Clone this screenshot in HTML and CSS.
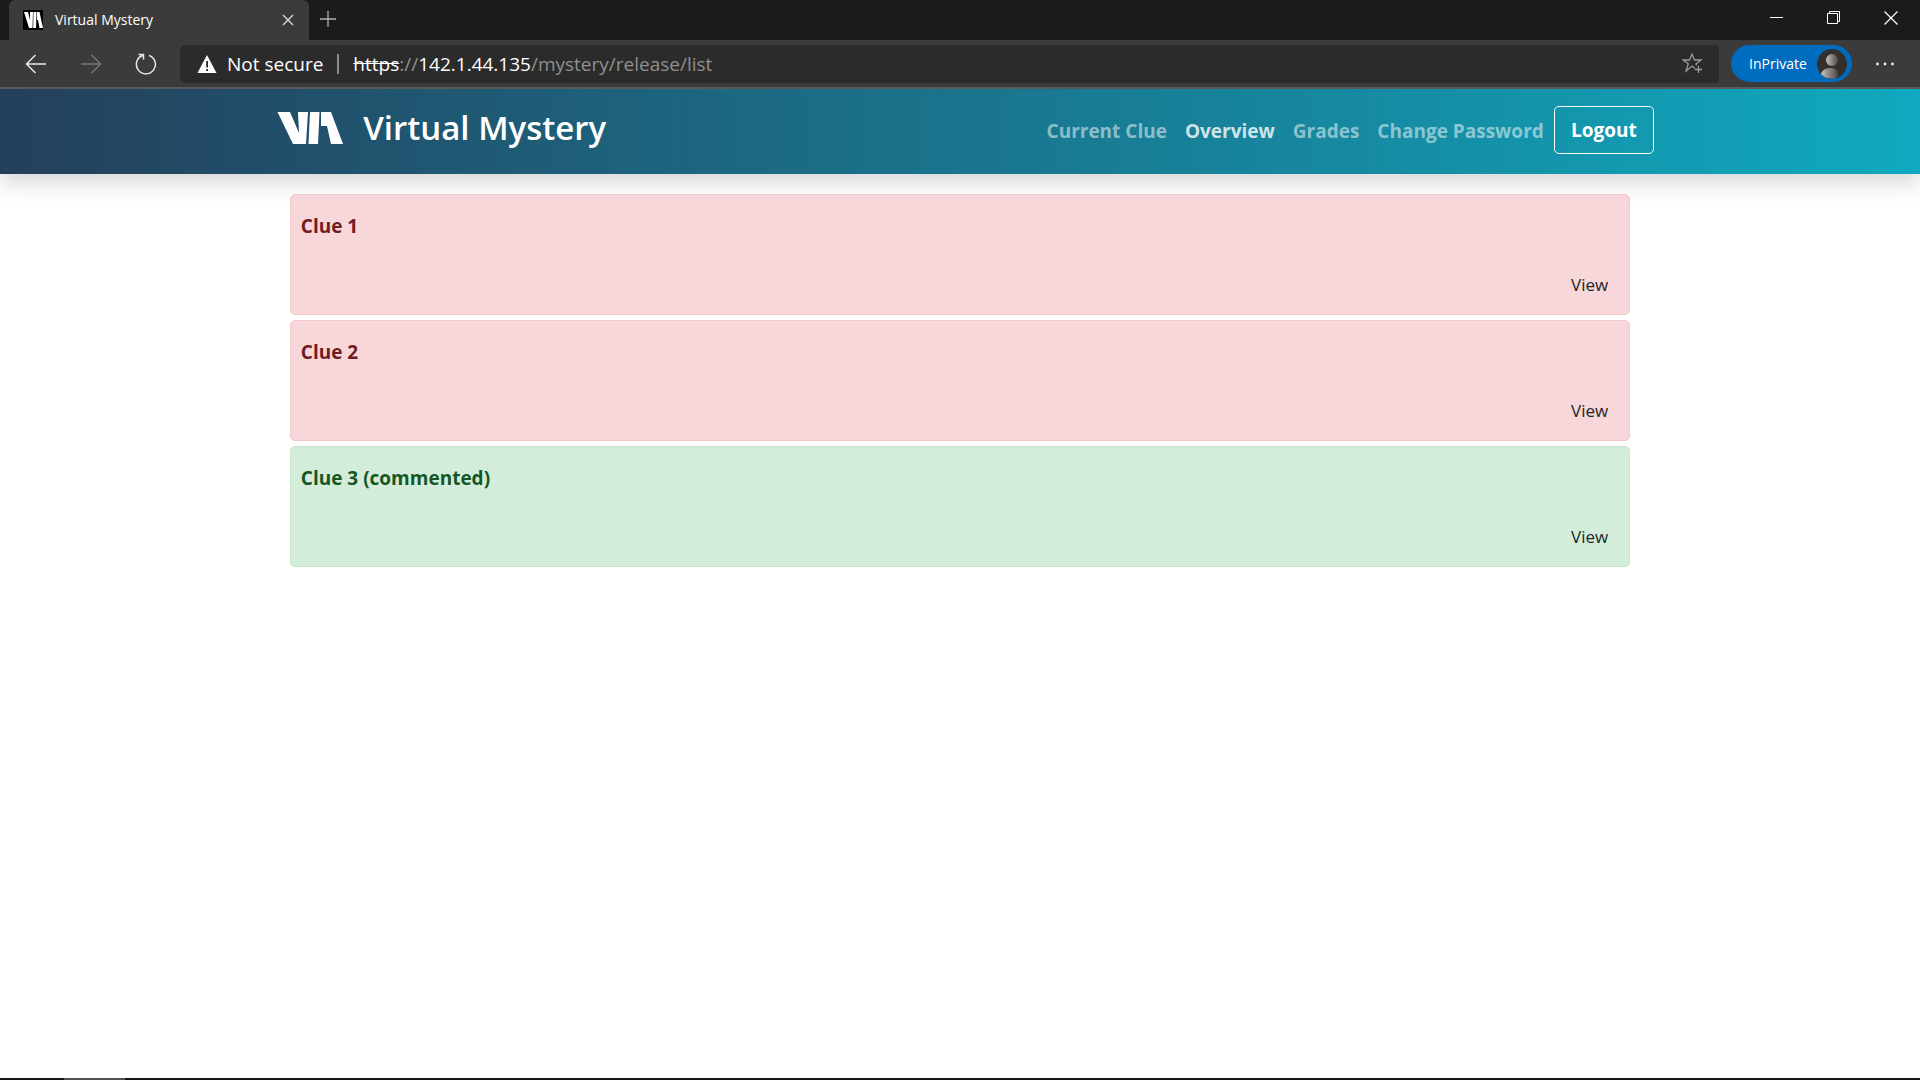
FILE: index.html
```html
<!DOCTYPE html>
<html lang="en">
<head>
<meta charset="utf-8">
<meta name="viewport" content="width=device-width, initial-scale=1">
<title>Virtual Mystery</title>
<link rel="stylesheet" href="styles.css">
</head>
<body>
<div class="window">
  <div class="tabstrip">
    <div class="tab">
      <svg class="favicon" width="20" height="20" viewBox="0 0 20 20" aria-hidden="true"><path fill="#000" d="M0 0h20v20H0z"/><path fill="#fff" d="M1 2h4l2 8V2h3l-.5 16H6zM10.500 2h3l-.5 16h-2.800zM14 2h2.500L20 18h-3.500l-1.500-8h-1z"/></svg>
      <span class="tab-title">Virtual Mystery</span>
      <button class="tab-close" aria-label="Close tab"><svg width="12" height="12" viewBox="0 0 12 12" fill="none" stroke="#ddd" stroke-width="1.300"><path d="M1 1l10 10M11 1L1 11"/></svg></button>
    </div>
    <button class="new-tab" aria-label="New tab"><svg width="16" height="16" viewBox="0 0 16 16" fill="none" stroke="#b5b5b5" stroke-width="1.300"><path d="M8 0v16M0 8h16"/></svg></button>
    <div class="window-controls">
      <button class="window-button" aria-label="Minimize"><svg width="14" height="14" viewBox="0 0 14 14" fill="none" stroke="#fff"><path d="M0 6.500h13"/></svg></button>
      <button class="window-button" aria-label="Restore"><svg width="14" height="14" viewBox="0 0 14 14" fill="none" stroke="#fff"><path d="M.5 2.500h10v10H.5zM2.500 2.500v-2h10v10h-2"/></svg></button>
      <button class="window-button" aria-label="Close"><svg width="14" height="14" viewBox="0 0 14 14" fill="none" stroke="#fff" stroke-width="1.200"><path d="M.5.5l13 13M13.500.5l-13 13"/></svg></button>
    </div>
  </div>
  <div class="toolbar">
    <button class="tool" aria-label="Back"><svg width="22" height="20" viewBox="0 0 22 20" fill="none" stroke="#e8e8e8" stroke-width="1.500"><path d="M21 10H2M10.500 1l-9 9 9 9"/></svg></button>
    <button class="tool" aria-label="Forward"><svg width="22" height="20" viewBox="0 0 22 20" fill="none" stroke="#777" stroke-width="1.500"><path d="M1 10h19M11.500 1l9 9-9 9"/></svg></button>
    <button class="tool" aria-label="Refresh"><svg width="22" height="22" viewBox="0 0 22 22" fill="none" stroke="#e8e8e8" stroke-width="1.500"><path d="M14 2.400A9.500 9.500 0 1 1 7.500 2.500M3.500 1.500h5v5"/></svg></button>
    <div class="address">
      <svg class="warning" width="20" height="20" viewBox="0 0 20 20" aria-hidden="true"><path fill="#fff" d="M10 1l9.500 18H.5z"/><path fill="#2b2b2b" d="M9.200 7h1.800v6.500H9.200zM9.200 15H11v2H9.200z"/></svg>
      <span class="security">Not secure</span>
      <span class="divider"></span>
      <span class="url"><s>https</s>://<b>142.1.44.135</b>/mystery/release/list</span>
      <button class="favorite" aria-label="Add to favorites"><svg width="22" height="22" viewBox="0 0 22 22" fill="none" stroke="#999" stroke-width="1.300"><path d="M13 15.500l-3-2.500-6 5 2.300-7.200L1 7h6.500L10 1l2.500 6H19l-5 4 .6 1.500M16.500 13v7M13 16.500h7"/></svg></button>
    </div>
    <button class="profile">InPrivate
      <svg width="30" height="30" viewBox="0 0 30 30" aria-hidden="true"><defs><linearGradient id="face"><stop offset="0" stop-color="#c4c0bc"/><stop offset="1" stop-color="#4c4845"/></linearGradient><clipPath id="disc"><circle cx="15" cy="15" r="15"/></clipPath></defs><circle cx="15" cy="15" r="15" fill="#33302e"/><g clip-path="url(#disc)" fill="url(#face)"><circle cx="15" cy="11" r="6"/><path d="M4 29v-4c1-4 5-6 10-6 4 0 7 2 7 6 0 2-1 4-3 5z"/></g></svg>
    </button>
    <button class="more" aria-label="Settings and more"><svg width="20" height="4" viewBox="0 0 20 4" fill="#eee"><circle cx="2.500" cy="2" r="1.400"/><circle cx="10" cy="2" r="1.400"/><circle cx="17.500" cy="2" r="1.400"/></svg></button>
  </div>
  <header class="site-header">
    <div class="header-inner">
      <a class="brand" href="#">
        <svg width="66" height="34" viewBox="0 0 66 34" fill="#fff" aria-hidden="true"><path d="M.5 1H13l9 21-1-21h10l-2 32H16zM33 1h9.500L41 33h-9.500zM44 1h10l12 32H54l-4-18h-6z"/></svg>
        <span>Virtual Mystery</span>
      </a>
      <nav class="nav">
        <a class="nav-link" href="#">Current Clue</a>
        <a class="nav-link active" href="#">Overview</a>
        <a class="nav-link" href="#">Grades</a>
        <a class="nav-link" href="#">Change Password</a>
        <button class="logout">Logout</button>
      </nav>
    </div>
  </header>
  <main class="clues">
    <section class="clue pending"><h2>Clue 1</h2><a class="view" href="#">View</a></section>
    <section class="clue pending"><h2>Clue 2</h2><a class="view" href="#">View</a></section>
    <section class="clue done"><h2>Clue 3 (commented)</h2><a class="view" href="#">View</a></section>
  </main>
  <div class="taskbar"><div class="taskbar-item"></div></div>
</div>
</body>
</html>
```
FILE: styles.css
```css
* { box-sizing: border-box; }
body {
  margin: 0;
  background: #fff;
  font-family: "Open Sans", "Noto Sans", sans-serif;
}
button {
  padding: 0;
  border: 0;
  background: none;
  font: inherit;
  color: inherit;
}
svg { display: block; flex: none; }
a { color: inherit; text-decoration: none; }
.window { display: flex; flex-direction: column; min-height: 100vh; }

/* Browser chrome */
.tabstrip {
  display: flex;
  align-items: stretch;
  height: 40px;
  padding-right: 1px;
  padding-left: 9px;
  background: #1b1b1b;
  color: #fff;
}
.tab {
  display: flex;
  align-items: center;
  width: 300px;
  padding: 0 15px 0 14px;
  border-radius: 6px 6px 0 0;
  background: #3b3b3b;
}
.tab-title { flex: 1; margin-left: 12px; padding-bottom: 2px; font-size: 14px; }
.new-tab { padding: 0 11px 2px; }
.window-controls { display: flex; margin-left: auto; }
.window-button {
  display: flex;
  align-items: center;
  justify-content: center;
  width: 57px;
  padding-bottom: 4px;
}
.toolbar {
  display: flex;
  align-items: center;
  height: 49px;
  padding: 0 25px;
  border-bottom: 2px solid #5c5c5c;
  background: #3b3b3b;
  color: #fff;
}
.tool { width: 22px; margin-right: 33px; }
.tool:nth-child(3) { margin-right: 23px; }
.address {
  display: flex;
  flex: 1;
  align-items: center;
  height: 38px;
  padding: 0 15px 0 17px;
  border-radius: 5px;
  background: #2b2b2b;
  font-size: 19px;
}
.security { margin-left: 10px; }
.divider { width: 2px; height: 20px; margin: 0 14px; background: #8a8a8a; }
.url { color: #8f8f8f; }
.url s, .url b { color: #fff; font-weight: 400; }
.favorite { margin-left: auto; }
.profile {
  display: flex;
  align-items: center;
  justify-content: space-between;
  width: 121px;
  height: 37px;
  margin-left: 12px;
  padding: 0 5px 0 18px;
  border-radius: 19px;
  background: #006cc0;
  font-size: 14px;
}
.more { margin-left: 23px; }

/* Site header */
.site-header {
  background: linear-gradient(90deg, #243f5b, #10a9bf);
  box-shadow: 0 10px 20px rgba(0, 0, 0, .15);
  color: #fff;
}
.header-inner {
  display: flex;
  align-items: center;
  justify-content: space-between;
  width: 73%;
  height: 85px;
  margin: 0 auto;
  padding-right: 7px;
  padding-left: 18px;
}
.brand {
  display: flex;
  align-items: center;
  gap: 20px;
  padding-bottom: 8px;
  font-size: 33px;
  font-weight: 600;
}
.nav {
  display: flex;
  align-items: center;
  gap: 18px;
  padding-bottom: 3px;
  font-size: 19px;
  font-weight: 700;
}
.nav-link { padding-top: 2px; color: rgba(255, 255, 255, .5); }
.nav-link.active { color: rgba(255, 255, 255, .8); }
.logout {
  height: 48px;
  width: 100px;
  margin-left: -8px;
  border: 1px solid #fff;
  border-radius: 5px;
}

/* Clue list */
.clues {
  display: flex;
  flex: 1;
  flex-direction: column;
  gap: 5px;
  width: 72%;
  margin: 0 auto;
  padding: 20px 21px;
}
.clue {
  display: flex;
  flex-direction: column;
  justify-content: space-between;
  min-height: 121px;
  padding: 17px 21px 17px 10px;
  border: 1px solid;
  border-radius: 5px;
}
.clue h2 { margin: 0; font-size: 19px; line-height: 28px; font-weight: 700; }
.pending { border-color: #f5c6cb; background: #f7d7da; color: #721c24; }
.done { border-color: #c3e6cb; background: #d4edda; color: #155724; }
.view { align-self: flex-end; font-size: 17px; line-height: 24px; color: #212529; }

.taskbar { height: 2px; padding-left: 64px; background: #151515; }
.taskbar-item { width: 61px; height: 2px; background: #505050; }
```
